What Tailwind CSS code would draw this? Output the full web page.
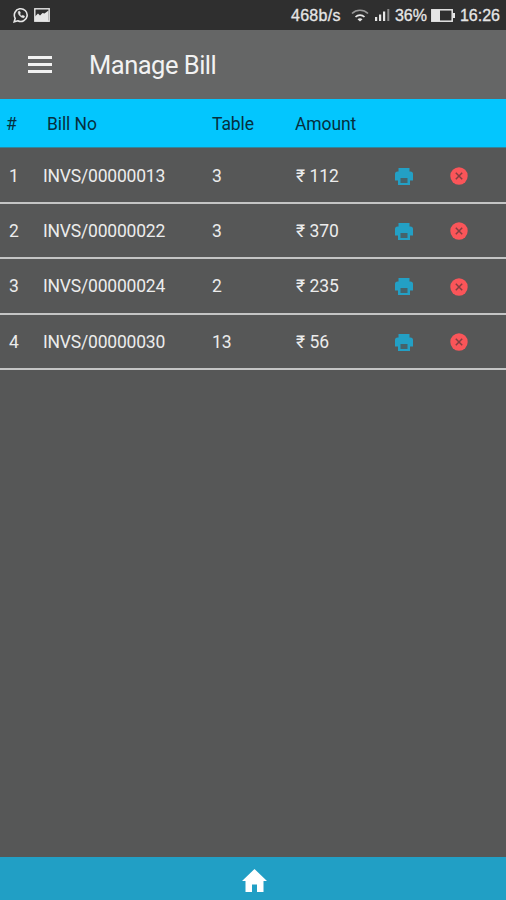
<!DOCTYPE html>
<html lang="en">
<head>
    <meta charset="UTF-8">
    <title>Manage Bill</title>
    <script src="https://cdn.jsdelivr.net/npm/@tailwindcss/browser@4"></script>
</head>
<body class="bg-[#565757] h-screen flex flex-col overflow-hidden font-['Roboto','Noto_Sans',sans-serif]">
    <!-- Shared icons -->
    <svg class="hidden">
        <symbol id="print" viewBox="0 0 18 17">
            <path d="M3.500 0h11v3.500h1A2.500 2.500 0 0 1 18 6V12.500h-3V17H3V12.500H0V6A2.500 2.500 0 0 1 2.500 3.500h1z" />
            <path d="M5.500 10h7v5h-7z" fill="#45636b" />
        </symbol>
        <symbol id="cancel" viewBox="0 0 18 18">
            <circle cx="9" cy="9" r="8.700" fill="#fa5559" />
            <path d="M5.800 5.800l6.400 6.400M12.200 5.800l-6.400 6.400" stroke="#823f41" stroke-width="1.500" />
        </symbol>
    </svg>

    <!-- Status bar -->
    <div class="h-[30px] shrink-0 bg-[#2f2f2f] flex items-center justify-between pl-[13px] pr-[6px] text-[#e6e6e6]">
        <div class="flex items-center gap-[5px]">
            <svg class="w-[16px] h-[16px]" viewBox="0 0 16 16" fill="none" stroke="currentColor">
                <path d="M1.200 14.800l1-3.500A6.400 6.400 0 1 1 4.800 13.800z" stroke-width="1.600" />
                <path d="M5.300 4.600c-.9 2.700 2.800 6.600 5.700 6.100l.6-1.500-1.900-.9-.8.8C7.900 8.700 7.100 7.800 6.800 6.900l.7-.8-.8-1.800z" fill="currentColor" stroke-width=".5" />
            </svg>
            <svg class="w-[16px] h-[14px]" viewBox="0 0 16 14" fill="none" stroke="currentColor">
                <rect x=".8" y=".8" width="14.400" height="12.400" stroke-width="1.400" />
                <path d="M1 13V8.500l3-3 2 2 2.500-2.500 2 .5 4-3v11z" fill="currentColor" stroke="none" />
            </svg>
        </div>
        <div class="flex items-center font-['Liberation_Sans',sans-serif] text-[16px] leading-none [-webkit-text-stroke:0.3px_#e6e6e6]">
            <span class="w-[60px] whitespace-nowrap pt-[2px] tracking-[0.3px]">468b/s</span>
            <svg class="w-[18px] h-[13px]" viewBox="0 0 18 13" fill="none" stroke="currentColor" stroke-width="1.700">
                <path d="M1 4.500a11.500 11.500 0 0 1 16 0" stroke="#9a9a9a" />
                <path d="M4.500 8a6.500 6.500 0 0 1 9 0" />
                <path d="M9 12.500L6.500 10.300a4 4 0 0 1 5 0z" fill="currentColor" stroke="none" />
            </svg>
            <svg class="w-[15px] h-[12px] ml-[6px]" viewBox="0 0 15 12" fill="currentColor">
                <rect x="0" y="8" width="2.200" height="4" />
                <rect x="4" y="5.500" width="2.200" height="6.500" />
                <rect x="8" y="2.500" width="2.200" height="9.500" />
                <rect x="12.300" y="0" width="2" height="12" fill="#8a8a8a" />
            </svg>
            <span class="ml-[5px] w-[36px] pt-[2px]">36%</span>
            <svg class="w-[24px] h-[13px]" viewBox="0 0 24 13">
                <rect x=".8" y=".8" width="20.400" height="11.400" fill="none" stroke="currentColor" stroke-width="1.500" />
                <rect x="1" y="1" width="8" height="11" fill="currentColor" />
                <rect x="22" y="4" width="2" height="5" fill="currentColor" />
            </svg>
            <span class="ml-[5px] pt-[2px]">16:26</span>
        </div>
    </div>

    <!-- App bar -->
    <header class="h-[69px] shrink-0 bg-[#656666] flex items-center pl-[28px] text-[#f2f2f2]">
        <svg class="w-[24px] h-[17px]" viewBox="0 0 24 17" fill="currentColor">
            <path d="M0 0h24v3H0zM0 7h24v3H0zM0 14h24v3H0z" />
        </svg>
        <h1 class="ml-[37px] pt-[2px] text-[25.500px] leading-none tracking-[-0.5px]">Manage Bill</h1>
    </header>

    <!-- Bill list -->
    <main class="grow text-[17.500px] text-[#ececec]">
        <div class="h-[49px] bg-[#03c6fe] text-[#06303e] grid grid-cols-[41px_165px_83px_100px_55px_1fr] items-center pl-[6px] pt-[3px] border-b border-[#31849c] tracking-[-0.1px]">
            <div>#</div>
            <div>Bill No</div>
            <div>Table</div>
            <div>Amount</div>
        </div>
        <div class="h-[56px] grid grid-cols-[34px_169px_84px_99px_55px_1fr] items-center pl-[9px] pt-[2px] border-b-2 border-[#c4c5c5]">
            <div>1</div>
            <div class="tracking-[-0.2px]">INVS/00000013</div>
            <div>3</div>
            <div>₹ 112</div>
            <svg class="w-[18px] h-[17px] fill-[#23a0c5]"><use href="#print" /></svg>
            <svg class="w-[18px] h-[18px]"><use href="#cancel" /></svg>
        </div>
        <div class="h-[55px] grid grid-cols-[34px_169px_84px_99px_55px_1fr] items-center pl-[9px] pt-px border-b-2 border-[#c4c5c5]">
            <div>2</div>
            <div class="tracking-[-0.2px]">INVS/00000022</div>
            <div>3</div>
            <div>₹ 370</div>
            <svg class="w-[18px] h-[17px] fill-[#23a0c5]"><use href="#print" /></svg>
            <svg class="w-[18px] h-[18px]"><use href="#cancel" /></svg>
        </div>
        <div class="h-[56px] grid grid-cols-[34px_169px_84px_99px_55px_1fr] items-center pl-[9px] pt-px border-b-2 border-[#c4c5c5]">
            <div>3</div>
            <div class="tracking-[-0.2px]">INVS/00000024</div>
            <div>2</div>
            <div>₹ 235</div>
            <svg class="w-[18px] h-[17px] fill-[#23a0c5]"><use href="#print" /></svg>
            <svg class="w-[18px] h-[18px]"><use href="#cancel" /></svg>
        </div>
        <div class="h-[55px] grid grid-cols-[34px_169px_84px_99px_55px_1fr] items-center pl-[9px] pt-px border-b-2 border-[#c4c5c5]">
            <div>4</div>
            <div class="tracking-[-0.2px]">INVS/00000030</div>
            <div>13</div>
            <div>₹ 56</div>
            <svg class="w-[18px] h-[17px] fill-[#23a0c5]"><use href="#print" /></svg>
            <svg class="w-[18px] h-[18px]"><use href="#cancel" /></svg>
        </div>
    </main>

    <!-- Bottom navigation -->
    <footer class="h-[43px] shrink-0 bg-[#219fc5] flex items-center justify-center pl-[2px] pt-[4px]">
        <svg class="w-[25px] h-[23px]" viewBox="0 0 25 23" fill="#fff">
            <path d="M12.500 0L0 12h3.500v11h6.500v-7.500h5V23h6.500V12H25z" />
        </svg>
    </footer>
</body>
</html>
